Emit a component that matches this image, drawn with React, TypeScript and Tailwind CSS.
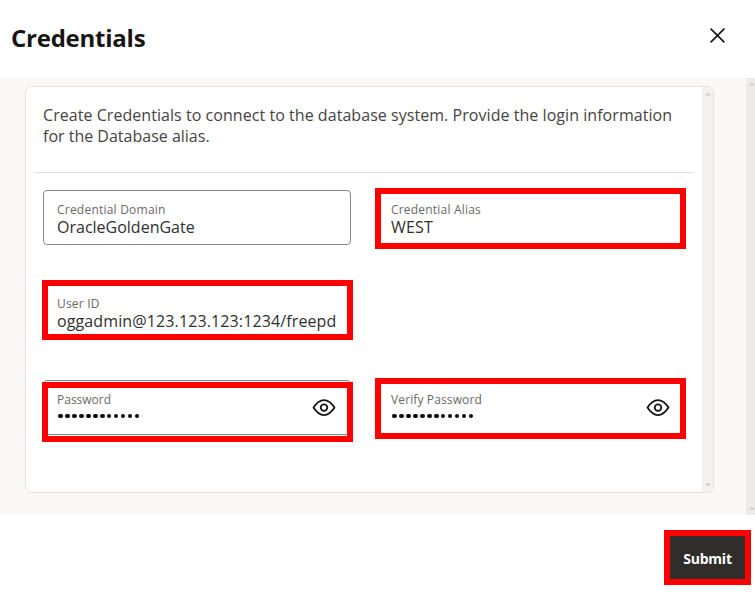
import type { ReactNode } from "react";

function EyeIcon() {
  return (
    <svg width="24" height="24" viewBox="0 0 24 24" fill="none" stroke="#161513" strokeWidth="1.8" strokeLinejoin="round" className="shrink-0">
      <path d="M1.5 11.6C4.6 6.7 8 4.1 12 4.1S19.4 6.7 22.5 11.6C19.4 16.5 16 19.1 12 19.1S4.6 16.5 1.5 11.6Z" />
      <circle cx="12" cy="11.6" r="3.3" />
    </svg>
  );
}

function Scrollbar({ className }: { className: string }) {
  return (
    <div className={`flex shrink-0 flex-col items-center justify-between ${className}`}>
      <svg width="6" height="4" viewBox="0 0 6 4" fill="#cdcdcd"><path d="M0 3.5 3 .5 6 3.5Z" /></svg>
      <svg width="6" height="4" viewBox="0 0 6 4" fill="#cdcdcd"><path d="M0 .5 3 3.5 6 .5Z" /></svg>
    </div>
  );
}

type FieldProps = { label: string; labelClass: string; mark?: string; secret?: boolean; children: ReactNode };

function Field({ label, labelClass, mark, secret, children }: FieldProps) {
  return (
    <div className="relative flex h-[55px] w-[308px] items-start rounded-[4px] border border-[#8b8a89] pl-[13px] pr-[14px]">
      <div className="flex grow flex-col pt-[10px]">
        <span className={`h-4 whitespace-nowrap text-[12px] leading-[17px] text-[#6b6967] ${labelClass}`}>{label}</span>
        {children}
      </div>
      {secret && <div className="pt-[15px]"><EyeIcon /></div>}
      {mark && <div className={`absolute border-6 border-[#ff0000] ${mark}`} />}
    </div>
  );
}

function Dots() {
  return (
    <div className="flex h-[18px] items-center gap-[2.4px] pl-[1px]">
      {Array.from({ length: 12 }, (_, i) => (
        <span key={i} className="h-[4.6px] w-[4.6px] rounded-full bg-[#080808]" />
      ))}
    </div>
  );
}

const value = "h-5 whitespace-nowrap text-[16px] leading-5 text-[#30302f]";

export default function App() {
  return (
    <div className="flex h-[597px] w-[755px] flex-col overflow-hidden bg-white font-['Open_Sans','Noto_Sans',sans-serif]">
      <header className="flex h-[78px] shrink-0 justify-between pl-[11px] pr-[30px]">
        <h1 className="pt-[20px] text-[24px] leading-9 font-bold tracking-[-0.24px] text-[#161513]">Credentials</h1>
        <svg width="15" height="15" viewBox="0 0 15 15" className="mt-[28px]" stroke="#161513" strokeWidth="1.6">
          <path d="M.6.6 14.4 14.4M14.4.6.6 14.4" />
        </svg>
      </header>
      <main className="flex h-[437px] shrink-0 justify-between bg-[#faf9f8] pl-[25px]">
        <section className="mt-[8px] flex h-[407px] w-[689px] overflow-hidden rounded-[6px] border border-[#e3e2e1] bg-white">
          <div className="w-[676px] shrink-0 pl-[9px] pr-[9px]">
            <p className="h-[86px] border-b border-[#dfdedd] pt-[18px] pl-[8px] text-[16px] leading-[21px] whitespace-nowrap text-[#454443]">
              <span className="tracking-[0.05px]">Create Credentials to connect to the database system. Provide the login information</span>
              <br />
              <span>for the Database alias.</span>
            </p>
            <div className="flex flex-col pt-[17px] pl-[8px]">
              <div className="flex gap-[26px]">
                <Field label="Credential Domain" labelClass="tracking-[0.22px]">
                  <span className={value}>OracleGoldenGate</span>
                </Field>
                <Field label="Credential Alias" labelClass="tracking-[0.2px]" mark="-left-[3px] -top-[3px] h-[61px] w-[311px]">
                  <span className={`${value} tracking-[0.2px]`}>WEST</span>
                </Field>
              </div>
              <div className="mt-[39px]">
                <Field label="User ID" labelClass="tracking-[0.2px]" mark="-left-[2px] -top-[5px] h-[60px] w-[311px]">
                  <span className={`${value} tracking-[0.12px]`}>oggadmin@123.123.123:1234/freepd</span>
                </Field>
              </div>
              <div className="mt-[41px] flex gap-[26px]">
                <Field label="Password" labelClass="" secret mark="-left-[2px] top-[1px] h-[60px] w-[311px]">
                  <Dots />
                </Field>
                <Field label="Verify Password" labelClass="tracking-[0.12px]" secret mark="-left-[3px] -top-[3px] h-[61px] w-[311px]">
                  <Dots />
                </Field>
              </div>
            </div>
          </div>
          <Scrollbar className="w-[11px] bg-[#f2f2f2] py-[5px]" />
        </section>
        <Scrollbar className="w-[9px] bg-[#edecea] py-[4px] pl-[3px]" />
      </main>
      <footer className="flex h-[82px] shrink-0 justify-end pt-[15px] pr-[4px]">
        <button className="h-[55px] w-[87px] border-6 border-[#ff0000] bg-[#312d2a] pt-[2px] text-[14px] leading-5 font-bold tracking-[-0.2px] text-white">
          Submit
        </button>
      </footer>
    </div>
  );
}
